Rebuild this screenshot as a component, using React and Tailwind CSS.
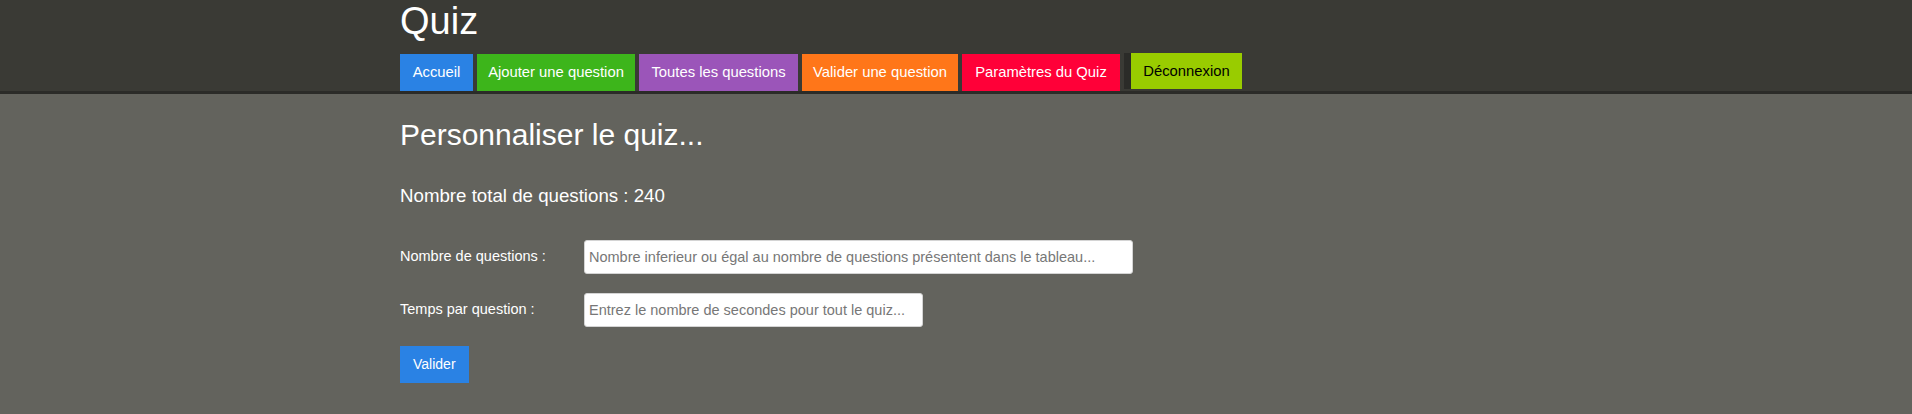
const NAV = [
  { label: "Accueil", cls: "w-[73px] bg-[#2a82e4] text-white" },
  { label: "Ajouter une question", cls: "w-[158px] bg-[#3db51b] text-white" },
  { label: "Toutes les questions", cls: "w-[159px] bg-[#9b55b9] text-white" },
  { label: "Valider une question", cls: "w-[156px] bg-[#ff7619] text-white" },
  { label: "Paramètres du Quiz", cls: "w-[158px] bg-[#ff0038] text-white" },
];

function Field({ label, placeholder, width }) {
  return (
    <div className="flex items-center">
      <label className="w-[184px] text-[14.5px] text-white">{label}</label>
      <input
        type="text"
        placeholder={placeholder}
        className={`${width} h-[34px] rounded-[3px] border border-[#d4d4d4] bg-white px-[4px] text-[14.5px] text-[#333] placeholder:text-[#777] outline-none`}
      />
    </div>
  );
}

export default function App() {
  return (
    <div
      className="min-h-screen bg-[#63635d]"
      style={{ fontFamily: '"Liberation Sans", Arial, sans-serif' }}
    >
      {/* header */}
      <header className="bg-[#3a3a35] border-b-[3px] border-[#2b2b28]">
        <div className="mx-auto w-[1112px]">
          <h1 className="text-[38px] leading-[1.15] text-white">Quiz</h1>
          <nav className="mt-[9px] flex items-end gap-1">
            {NAV.map((n) => (
              <a
                key={n.label}
                href="#"
                className={`${n.cls} h-[37px] flex items-center justify-center text-[14.8px] whitespace-nowrap`}
              >
                {n.label}
              </a>
            ))}
            <a
              href="#"
              className="mb-[2px] h-[36px] w-[118px] border-l-[7px] border-[#2b2b28] bg-[#99cc00] flex items-center justify-center text-[14.8px] text-black whitespace-nowrap"
            >
              Déconnexion
            </a>
          </nav>
        </div>
      </header>

      {/* content */}
      <main className="mx-auto w-[1112px] pt-[24px]">
        <h2 className="text-[30px] leading-[1.15] text-white">Personnaliser le quiz...</h2>
        <h3 className="mt-[33px] text-[18.7px] leading-[1.15] text-white">
          Nombre total de questions : 240
        </h3>
        <form className="mt-[33px] flex flex-col gap-[19px]">
          <Field
            label="Nombre de questions :"
            placeholder="Nombre inferieur ou égal au nombre de questions présentent dans le tableau..."
            width="w-[549px]"
          />
          <Field
            label="Temps par question :"
            placeholder="Entrez le nombre de secondes pour tout le quiz..."
            width="w-[339px]"
          />
          <div>
            <button
              type="button"
              className="h-[37px] bg-[#2a82e4] px-[13px] text-[14px] text-white"
            >
              Valider
            </button>
          </div>
        </form>
      </main>
    </div>
  );
}
